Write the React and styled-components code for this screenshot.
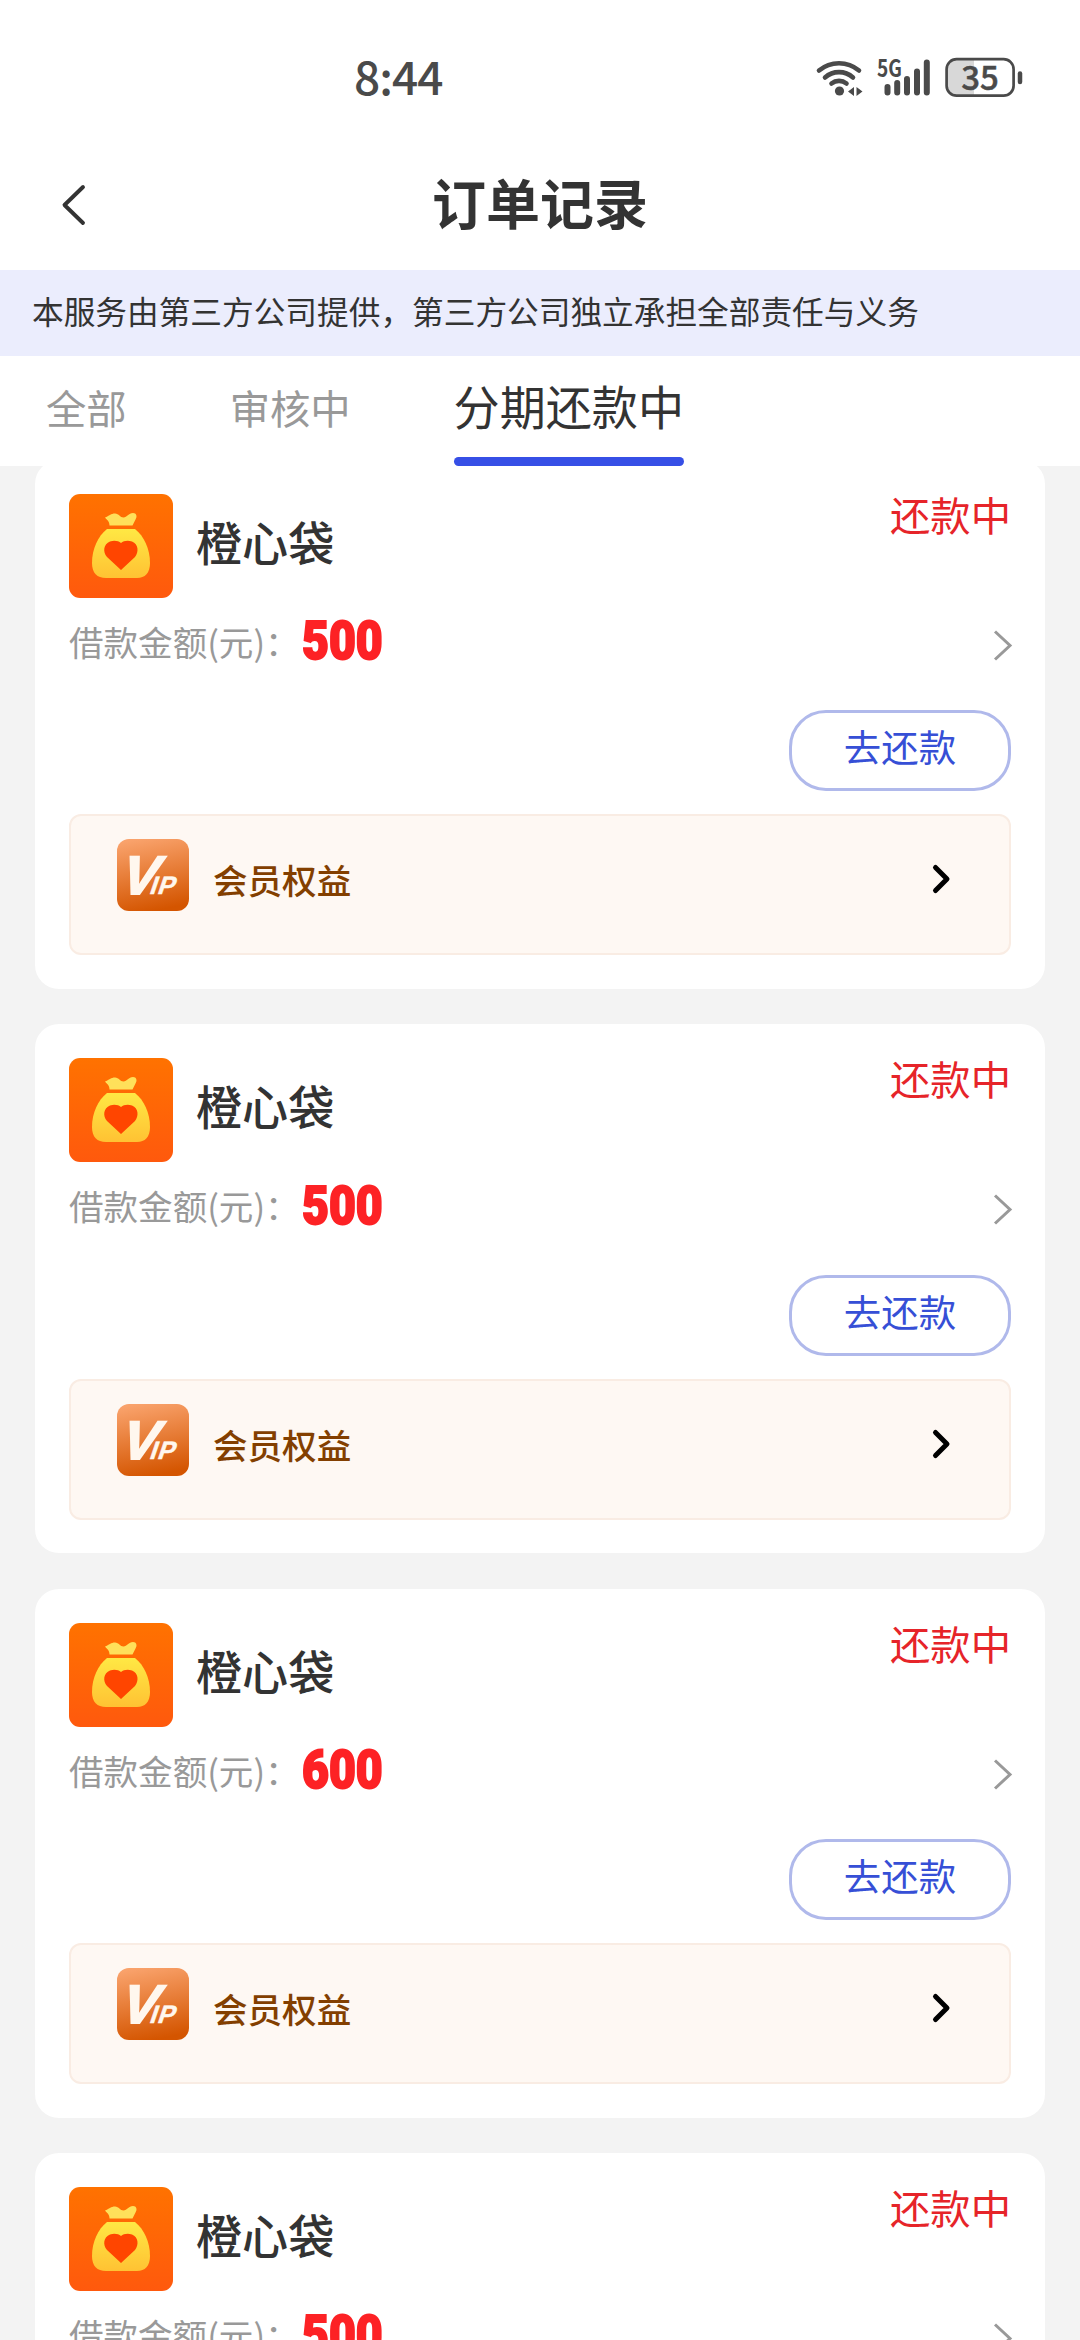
import styled, { createGlobalStyle } from 'styled-components';

const GlobalStyle = createGlobalStyle`
  * {
    box-sizing: border-box;
  }

  body {
    margin: 0;
    background: #f3f3f3;
    font-family: "Noto Sans CJK SC", "Noto Sans", sans-serif;
  }

  svg {
    display: block;
    flex: none;
    overflow: visible;
  }
`;

const Page = styled.div`
  width: 1080px;
  height: 2340px;
  display: flex;
  flex-direction: column;
  overflow: hidden;
`;

const StatusBar = styled.div`
  height: 140px;
  flex: none;
  display: flex;
  justify-content: space-between;
  align-items: flex-start;
  padding: 47px 54px 0 354px;
  background: #fff;
`;

const Time = styled.div`
  font-size: 46px;
  font-weight: 500;
  line-height: 56px;
  letter-spacing: -1px;
  color: #4a4a4a;
`;

const Header = styled.header`
  height: 130px;
  flex: none;
  display: grid;
  grid-template-columns: 110px 1fr 110px;
  align-items: center;
  background: #fff;
`;

const BackButton = styled.button`
  padding: 0 0 0 60px;
  border: 0;
  background: none;
`;

const Title = styled.h1`
  margin: 0;
  padding-bottom: 7px;
  font-size: 54px;
  font-weight: 700;
  line-height: 70px;
  text-align: center;
  color: #333;
`;

const Notice = styled.p`
  height: 86px;
  flex: none;
  margin: 0;
  padding-left: 32px;
  font-size: 31.68px;
  line-height: 81px;
  white-space: nowrap;
  background: #ebedfd;
  color: #333;
`;

const Tabs = styled.nav`
  height: 110px;
  flex: none;
  display: flex;
  gap: 103px;
  padding-left: 46px;
  background: #fff;
  z-index: 1;
`;

const Tab = styled.div`
  height: 110px;
  font-size: 40.32px;
  line-height: 102px;
  color: #999;
`;

const ActiveTab = styled(Tab)`
  display: flex;
  flex-direction: column;
  justify-content: space-between;
  font-size: 46.08px;
  line-height: 99px;
  color: #333;

  &::after {
    content: "";
    height: 9px;
    border-radius: 5px;
    background: #364fe6;
  }
`;

const List = styled.main`
  display: flex;
  flex-direction: column;
  gap: 35.5px;
  margin-top: -6.5px;
  padding: 0 35px;
`;

const Card = styled.section`
  height: 529px;
  flex: none;
  padding: 34px 34px 0;
  border-radius: 24px;
  background: #fff;
`;

const CardHead = styled.div`
  display: flex;
  height: 104px;
`;

const Name = styled.h2`
  margin: 0 auto 0 23px;
  font-size: 46.08px;
  font-weight: 500;
  line-height: 95px;
  color: #333;
`;

const Status = styled.span`
  font-size: 40.32px;
  line-height: 39px;
  color: #e62429;
`;

const AmountRow = styled.div`
  display: flex;
  align-items: center;
  height: 84px;
  margin-bottom: 28.5px;
`;

const Label = styled.span`
  width: 233px;
  font-size: 34.56px;
  line-height: 50px;
  padding-top: 2px;
  white-space: nowrap;
  color: #999;
`;

const Amount = styled.strong`
  flex: 1;
  padding-top: 3px;
  font-family: Roboto, sans-serif;
  font-size: 54px;
  font-weight: 900;
  line-height: 60px;
  transform: scaleX(0.86);
  transform-origin: left;
  -webkit-text-stroke: 2px #fd2225;
  color: #fd2225;
`;

const RepayButton = styled.button`
  display: block;
  width: 222px;
  height: 81px;
  margin: 0 0 23px auto;
  padding: 0 0 9px;
  border: 3px solid #b0b9eb;
  border-radius: 37px;
  background: #fff;
  font-family: inherit;
  font-size: 37.44px;
  line-height: 60px;
  color: #364fd6;
`;

const VipBox = styled.div`
  display: flex;
  align-items: flex-start;
  height: 141px;
  padding: 23px 59px 0 46px;
  border: 2px solid #f9ece3;
  border-radius: 12px;
  background: #fef8f3;
`;

const VipText = styled.span`
  margin: 0 auto 0 24px;
  font-size: 34.56px;
  font-weight: 500;
  line-height: 81px;
  color: #833f00;
`;

const VipArrow = styled.span`
  padding-top: 24px;
`;

const WifiIcon = () => (
  <svg width="48" height="40" viewBox="0 0 48 40" fill="none" stroke="#4a4a4a" strokeWidth="4.6" strokeLinecap="round">
    <path d="M3 13.5A31 31 0 0 1 43 13.5" />
    <path d="M9 20.500A21 21 0 0 1 37 20.500" />
    <path d="M15.500 26.500A12 12 0 0 1 30.500 26.500" />
    <circle cx="23.500" cy="34" r="4.600" fill="#4a4a4a" stroke="none" />
    <path d="M38 30V39L32 34.500ZM40.500 30V39L46.500 34.500Z" fill="#4a4a4a" stroke="none" />
  </svg>
);

const SignalIcon = () => (
  <svg width="56" height="40" viewBox="0 0 56 40">
    <text x="0" y="20" fontFamily="Noto Sans CJK SC, sans-serif" fontSize="24" fontWeight="700" textLength="25" lengthAdjust="spacingAndGlyphs" fill="#4a4a4a">5G</text>
    <g stroke="#4a4a4a" strokeWidth="6" strokeLinecap="round">
      <path d="M10.500 30V35.500M20.200 26V35.500M30 22V35.500M40 14.500V35.500M49.800 5.500V35.500" />
    </g>
  </svg>
);

const BatteryIcon = () => (
  <svg width="80" height="42" viewBox="0 0 80 42">
    <path d="M12 2H29V38H12A10 10 0 0 1 2 28V12A10 10 0 0 1 12 2Z" fill="#d8d8d8" />
    <rect x="1.600" y="2.200" width="67" height="36.500" rx="10" fill="none" stroke="#4a4a4a" strokeWidth="2.700" />
    <path d="M75 16.500V25" stroke="#4a4a4a" strokeWidth="4.500" strokeLinecap="round" />
    <text x="35" y="32.500" fontFamily="Noto Sans CJK SC, sans-serif" fontSize="33" fontWeight="500" stroke="#4a4a4a" strokeWidth="0.500" textAnchor="middle" fill="#4a4a4a">35</text>
  </svg>
);

const StatusIcons = styled.div`
  display: flex;
  padding-top: 10px;

  svg:nth-child(2) {
    margin-left: 13px;
  }

  svg:nth-child(3) {
    margin-left: 12px;
    margin-right: 1px;
  }
`;

const BackIcon = () => (
  <svg width="28" height="44" viewBox="0 0 28 44" fill="none" stroke="#333" strokeWidth="3.900" strokeLinecap="round" strokeLinejoin="round">
    <path d="M23 4L4.500 22L23 40" />
  </svg>
);

const BagIcon = () => (
  <svg width="104" height="104" viewBox="0 0 104 104">
    <defs>
      <linearGradient id="bagBg" x1="0" y1="0" x2="0" y2="1">
        <stop offset="0" stopColor="#ff7200" />
        <stop offset="1" stopColor="#ff590d" />
      </linearGradient>
      <linearGradient id="bagFill" x1="0" y1="0" x2="0" y2="1">
        <stop offset="0" stopColor="#ffe844" />
        <stop offset="1" stopColor="#ffc233" />
      </linearGradient>
    </defs>
    <rect width="104" height="104" rx="11" fill="url(#bagBg)" />
    <path d="M36 23.500C40 22 42 19.500 46 19.500C50 19.500 51 23.500 54.500 23.500C58 23.500 59.500 19 64 19C67.500 19 68.500 22.500 66.500 25.500L63.500 31.500H40.500C40.500 27 38 26 36 23.500Z" fill="#ffe05a" />
    <path d="M38 35H66C75 42 81 55 81 69C81 79 76 84 68 84H37C28 84 23 79 23 69C23 55 29 42 38 35Z" fill="url(#bagFill)" />
    <path d="M52 76L38 63C33.500 58 34.500 50 41 47.500C45.500 46 49.500 47 52 49C54.500 47 58.500 46 63 47.500C69.500 50 70 58 66 63Z" fill="#ff4500" />
  </svg>
);

const VipIcon = () => (
  <svg width="72" height="72" viewBox="0 0 72 72">
    <defs>
      <linearGradient id="vipBg" x1="0.300" y1="0" x2="0.500" y2="1">
        <stop offset="0" stopColor="#f9a26b" />
        <stop offset="1" stopColor="#d45500" />
      </linearGradient>
    </defs>
    <rect width="72" height="72" rx="12" fill="url(#vipBg)" />
    <text fill="#fff7ee" stroke="#fff7ee" fontFamily="Liberation Sans, sans-serif" fontWeight="700" transform="translate(0 55) skewX(-19)">
      <tspan x="0.500" fontSize="54" strokeWidth="2">V</tspan>
      <tspan x="31.500" fontSize="25" strokeWidth="0.500" letterSpacing="1">IP</tspan>
    </text>
  </svg>
);

const orders = [
  { id: 1, name: '橙心袋', amount: 500 },
  { id: 2, name: '橙心袋', amount: 500 },
  { id: 3, name: '橙心袋', amount: 600 },
  { id: 4, name: '橙心袋', amount: 500 },
];

const Order = ({ name, amount }) => (
  <Card>
    <CardHead>
      <BagIcon />
      <Name>{name}</Name>
      <Status>还款中</Status>
    </CardHead>
    <AmountRow>
      <Label>借款金额(元)：</Label>
      <Amount>{amount}</Amount>
      <svg width="20" height="32" viewBox="0 0 20 32" fill="none" stroke="#999" strokeWidth="3" transform="translate(1 5.500)">
        <path d="M3 2L18 16L3 30" />
      </svg>
    </AmountRow>
    <RepayButton type="button">去还款</RepayButton>
    <VipBox>
      <VipIcon />
      <VipText>会员权益</VipText>
      <VipArrow>
        <svg width="20" height="32" viewBox="0 0 20 32" fill="none" stroke="#000" strokeWidth="5" strokeLinecap="round" strokeLinejoin="round">
          <path d="M5.500 4.500L17 16L5.500 27.500" />
        </svg>
      </VipArrow>
    </VipBox>
  </Card>
);

const App = () => {
  return (
    <Page>
      <GlobalStyle />
      <StatusBar>
        <Time>8:44</Time>
        <StatusIcons>
          <WifiIcon />
          <SignalIcon />
          <BatteryIcon />
        </StatusIcons>
      </StatusBar>
      <Header>
        <BackButton type="button" aria-label="返回"><BackIcon /></BackButton>
        <Title>订单记录</Title>
      </Header>
      <Notice>本服务由第三方公司提供，第三方公司独立承担全部责任与义务</Notice>
      <Tabs>
        <Tab>全部</Tab>
        <Tab>审核中</Tab>
        <ActiveTab>分期还款中</ActiveTab>
      </Tabs>
      <List>
        {orders.map((order) => (
          <Order key={order.id} name={order.name} amount={order.amount} />
        ))}
      </List>
    </Page>
  );
}

export default App;
